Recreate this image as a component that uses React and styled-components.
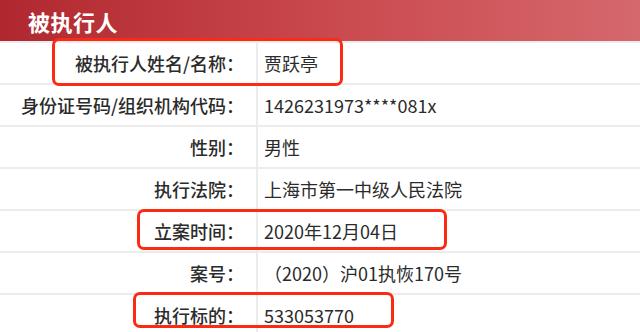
import React from "react";
import styled, { createGlobalStyle } from "styled-components";

const GlobalStyle = createGlobalStyle`
  html, body {
    margin: 0;
    padding: 0;
    background: #fff;
    overflow: hidden;
  }
  body {
    font-family: "Noto Sans CJK SC", "Noto Sans", sans-serif;
  }
`;

const Page = styled.div`
  position: relative;
  width: 640px;
  height: 332px;
  overflow: hidden;
`;

const Header = styled.div`
  height: 41px;
  display: flex;
  align-items: center;
  padding-left: 28px;
  background: linear-gradient(90deg, #b0282f 0%, #c9484d 50%, #d5686d 100%);
  color: #fff;
  font-size: 22px;
  font-weight: 700;
  letter-spacing: 0.5px;
  box-sizing: border-box;
`;

const Table = styled.div`
  display: flex;
  flex-direction: column;
`;

const Row = styled.div`
  display: grid;
  grid-template-columns: 258px 1fr;
  height: 42px;
  border-top: 2px solid #ececec;
  box-sizing: border-box;
`;

const Label = styled.div`
  display: flex;
  align-items: center;
  justify-content: flex-end;
  padding-right: 12px;
  border-right: 2px solid #ececec;
  color: #2b2b2b;
  font-size: 18px;
  font-weight: 500;
  white-space: nowrap;
`;

const Value = styled.div`
  display: flex;
  align-items: center;
  padding-left: 6px;
  color: #2b2b2b;
  font-size: 18px;
  white-space: nowrap;
`;

const Mark = styled.div`
  position: absolute;
  left: ${(p) => p.$x}px;
  top: ${(p) => p.$y}px;
  width: ${(p) => p.$w}px;
  height: ${(p) => p.$h}px;
  border: 3px solid #fb2a12;
  border-radius: 7px;
  box-sizing: border-box;
  pointer-events: none;
`;

const rows = [
  ["被执行人姓名/名称：", "贾跃亭"],
  ["身份证号码/组织机构代码：", "1426231973****081x"],
  ["性别：", "男性"],
  ["执行法院：", "上海市第一中级人民法院"],
  ["立案时间：", "2020年12月04日"],
  ["案号：", "（2020）沪01执恢170号"],
  ["执行标的：", "533053770"],
];

const marks = [
  { x: 52, y: 38, w: 291, h: 48 },
  { x: 137, y: 209, w: 310, h: 41 },
  { x: 133, y: 292, w: 261, h: 36 },
];

export default function App() {
  return (
    <Page>
      <GlobalStyle />
      <Header>被执行人</Header>
      <Table>
        {rows.map(([label, value]) => (
          <Row key={label}>
            <Label>{label}</Label>
            <Value>{value}</Value>
          </Row>
        ))}
      </Table>
      {marks.map((m, i) => (
        <Mark key={i} $x={m.x} $y={m.y} $w={m.w} $h={m.h} />
      ))}
    </Page>
  );
}
